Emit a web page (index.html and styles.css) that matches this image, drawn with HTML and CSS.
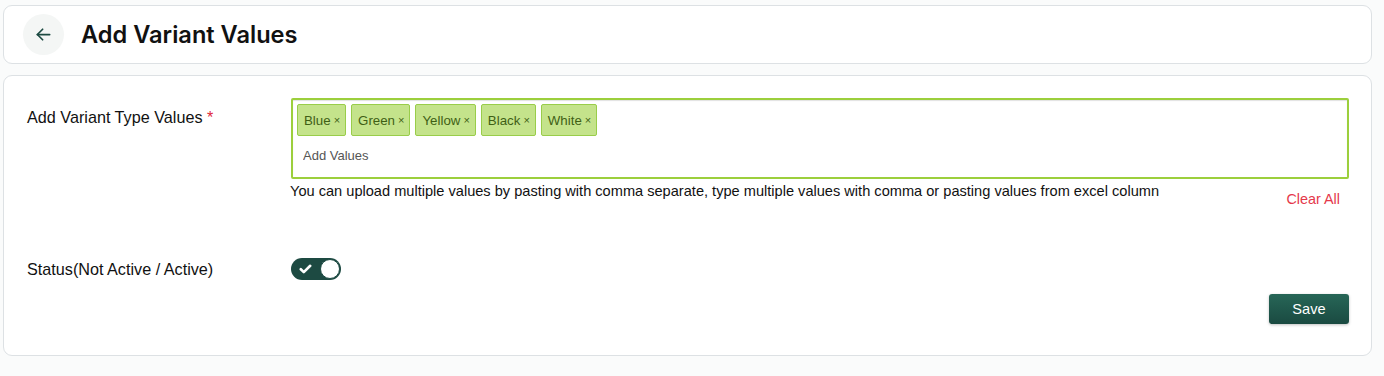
FILE: index.html
```html
<!DOCTYPE html>
<html lang="en">
  <head>
    <meta charset="UTF-8" />
    <meta name="viewport" content="width=device-width, initial-scale=1" />
    <title>Add Variant Values</title>
    <link rel="stylesheet" href="styles.css">
  </head>
  <body>
    <div class="card page-header">
      <button class="back-button" aria-label="Back">
        <svg width="21" height="21" viewBox="0 0 24 24" fill="none" stroke="#1d4a42" stroke-width="2" stroke-linecap="round" stroke-linejoin="round">
          <path d="M19 12H5" />
          <path d="M11 6l-6 6 6 6" />
        </svg>
      </button>
      <h1 class="page-title">Add Variant Values</h1>
    </div>

    <div class="card form-card">
      <div class="form-row values-row">
        <label class="form-label">Add Variant Type Values <span class="required">*</span></label>
        <div class="form-field">
          <div class="tag-input">
            <div class="tags">
              <span class="tag">Blue <span class="tag-remove">&times;</span></span>
              <span class="tag">Green <span class="tag-remove">&times;</span></span>
              <span class="tag">Yellow <span class="tag-remove">&times;</span></span>
              <span class="tag">Black <span class="tag-remove">&times;</span></span>
              <span class="tag">White <span class="tag-remove">&times;</span></span>
            </div>
            <input class="tag-entry" type="text" placeholder="Add Values" />
          </div>
          <p class="help-text">You can upload multiple values by pasting with comma separate, type multiple values with comma or pasting values from excel column</p>
          <div class="clear-row">
            <a class="clear-all" href="#">Clear All</a>
          </div>
        </div>
      </div>

      <div class="form-row status-row">
        <label class="form-label">Status(Not Active / Active)</label>
        <div class="form-field">
          <label class="switch">
            <input type="checkbox" checked />
            <span class="switch-track">
              <svg class="switch-check" width="13" height="10" viewBox="0 0 13 10" fill="none" stroke="#ffffff" stroke-width="2.6" stroke-linecap="round" stroke-linejoin="round">
                <path d="M1.8 5.2l3 2.9L11.2 1.8" />
              </svg>
              <span class="switch-knob"></span>
            </span>
          </label>
        </div>
      </div>

      <div class="actions">
        <button class="save-button">Save</button>
      </div>
    </div>
  </body>
</html>
```

FILE: styles.css
```css
/* Base styles */
body {
  font-family: "Liberation Sans", Arial, Helvetica, sans-serif;
  background: #fafbfb;
  color: #111111;
  margin: 0;
  padding: 5px 12px 0 3px;
}

/* Cards */
.card {
  background: #ffffff;
  border: 1px solid #dde1e4;
  border-radius: 9px;
}

.page-header {
  display: flex;
  align-items: center;
  height: 57px;
  padding: 0 19px;
  margin-bottom: 11px;
}

.back-button {
  width: 41px;
  height: 41px;
  border: none;
  border-radius: 50%;
  background: #f4f6f5;
  display: flex;
  align-items: center;
  justify-content: center;
  padding: 0;
  cursor: pointer;
}

.page-title {
  font-family: Inter, "Liberation Sans", sans-serif;
  font-size: 23.6px;
  font-weight: 600;
  margin: 0 0 0 17px;
  color: #111111;
}

.form-card {
  padding: 22px 22px 0 22px;
  box-sizing: border-box;
  height: 281px;
}

/* Form rows */
.form-row {
  display: grid;
  grid-template-columns: 265px 1fr;
}

.form-label {
  font-size: 16.2px;
  color: #111111;
  padding-left: 1px;
}

.values-row .form-label {
  padding-top: 10px;
}

.required {
  color: #e0283c;
}

/* Tag input */
.tag-input {
  border: 2px solid #9ccf3c;
  border-radius: 2px;
  height: 73px;
  padding: 4px 4px 0 4px;
  box-shadow: inset 0 1px 1px rgba(0, 0, 0, 0.12);
}

.tags {
  display: flex;
  gap: 5px;
}

.tag {
  display: inline-flex;
  align-items: center;
  height: 30px;
  padding: 0 5px 0 6px;
  background: #c4e38b;
  border: 1px solid #99cd4a;
  border-radius: 2px;
  font-size: 13.3px;
  color: #3f5f15;
}

.tag-remove {
  font-size: 11px;
  margin-left: 3px;
}

.tag-entry {
  display: block;
  border: none;
  outline: none;
  padding: 0;
  margin: 12px 0 0 6px;
  font-family: inherit;
  font-size: 13px;
  width: 300px;
}

.tag-entry::placeholder {
  color: #555555;
}

.help-text {
  font-size: 14.6px;
  margin: 4px 0 0 -1px;
}

.clear-row {
  display: flex;
  justify-content: flex-end;
  padding-right: 9px;
  margin-top: -8px;
}

.clear-all {
  color: #e5384b;
  font-size: 14.4px;
  text-decoration: none;
}

/* Status toggle */
.status-row {
  margin-top: 51px;
  align-items: center;
}

.switch {
  display: inline-block;
  cursor: pointer;
}

.switch input {
  display: none;
}

.switch-track {
  display: flex;
  align-items: center;
  justify-content: space-between;
  width: 50px;
  height: 22px;
  border-radius: 11px;
  background: #1d4a42;
  box-sizing: border-box;
  padding: 0 1px 0 8px;
}

.switch-knob {
  width: 20px;
  height: 20px;
  border-radius: 50%;
  background: #ffffff;
  box-sizing: border-box;
  border: 1px solid #1d4a42;
}

/* Actions */
.actions {
  display: flex;
  justify-content: flex-end;
  margin-top: 14px;
}

.save-button {
  width: 80px;
  height: 30px;
  border: none;
  border-radius: 3px;
  background: linear-gradient(#276657, #1a4a41);
  color: #ffffff;
  font-family: inherit;
  font-size: 14.6px;
  box-shadow: 0 1px 3px rgba(0, 0, 0, 0.25);
  cursor: pointer;
}
```
